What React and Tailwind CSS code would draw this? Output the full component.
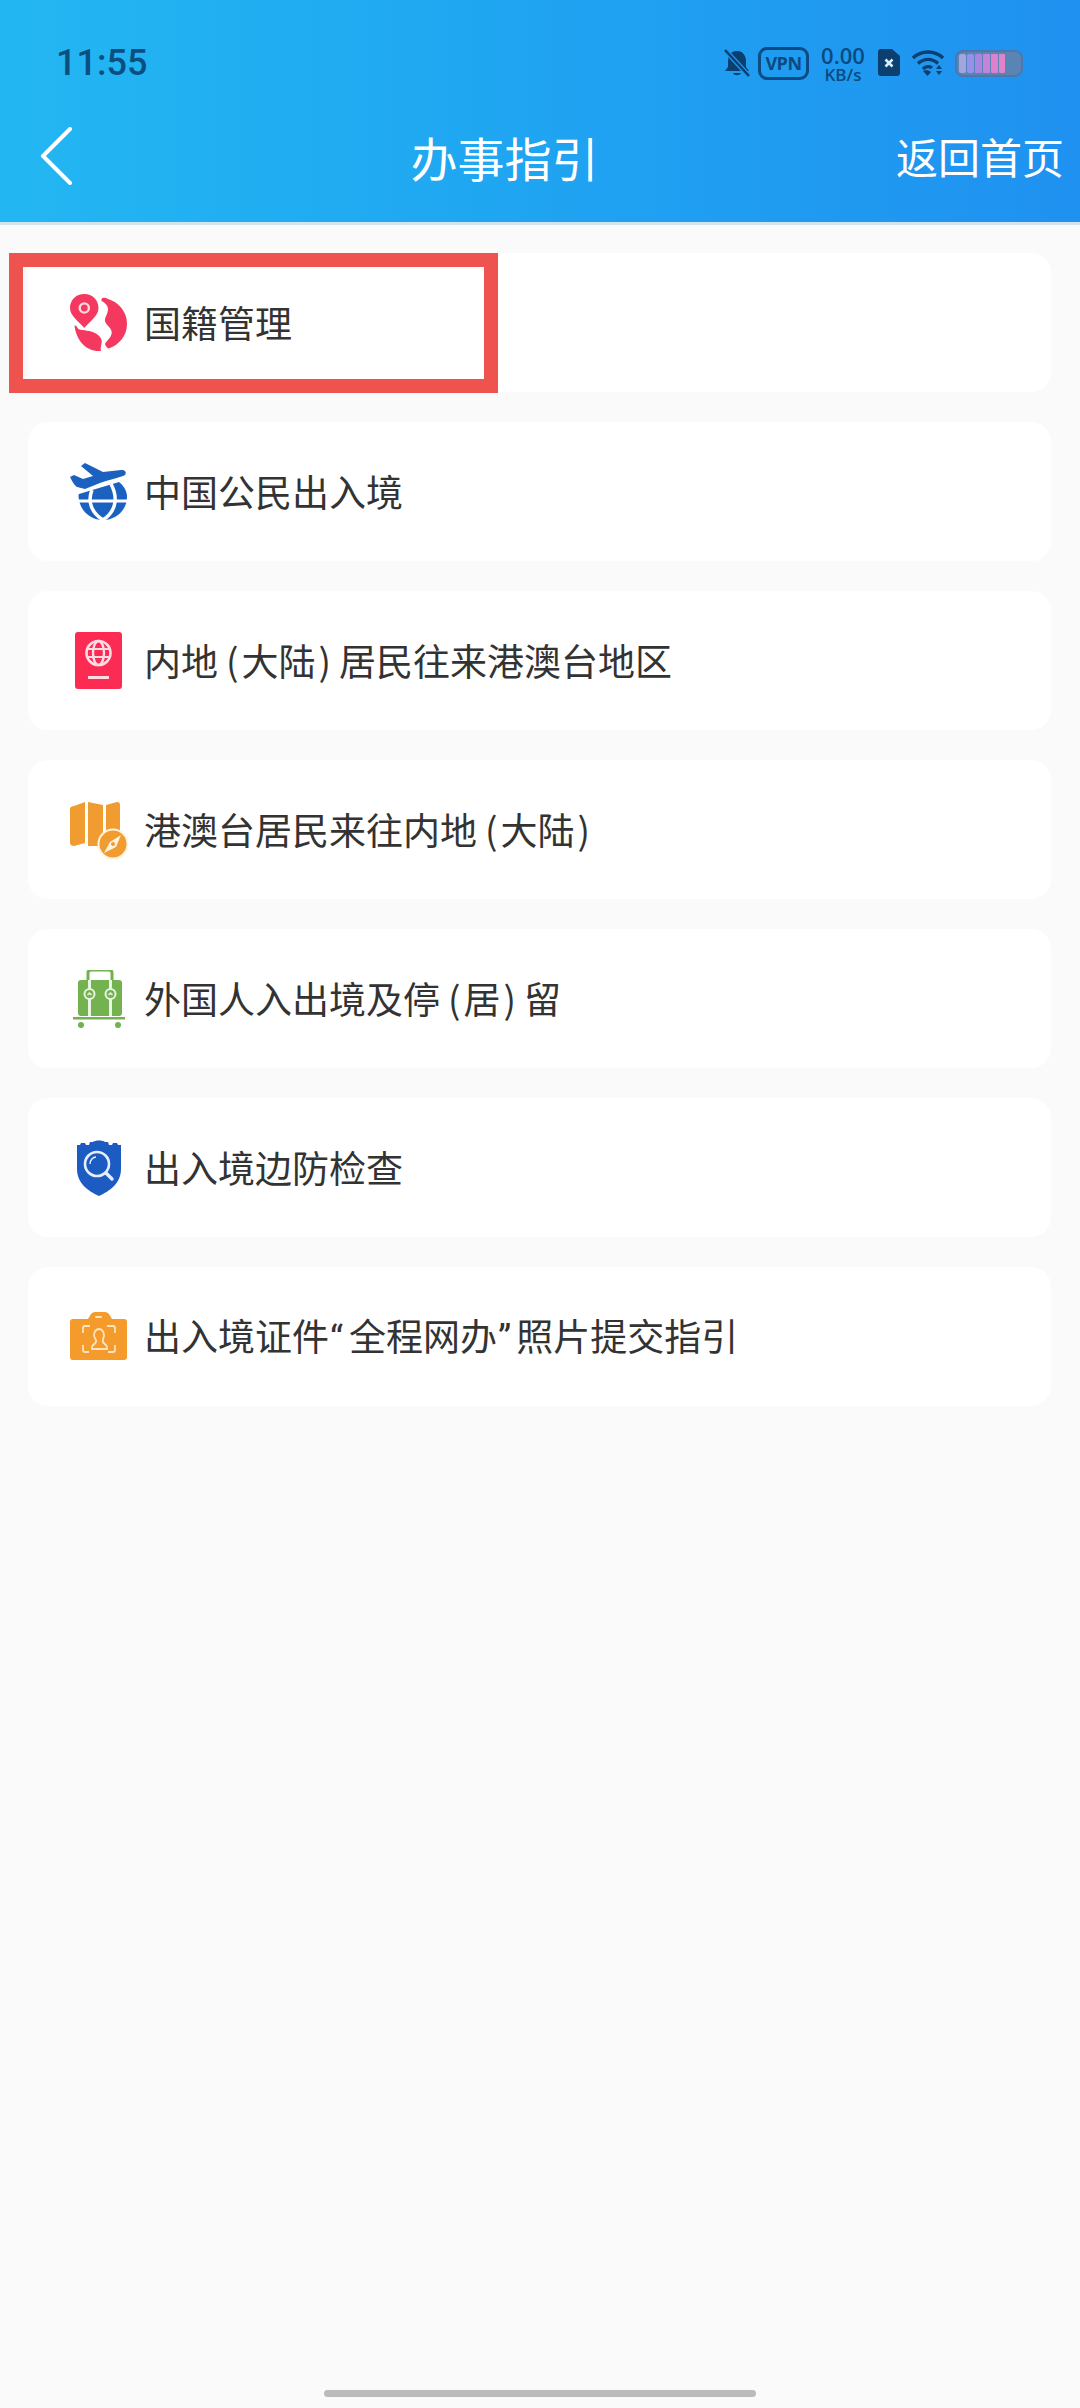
import React from "react";

const Globe = () => (
  <svg width="58" height="58" viewBox="0 0 58 58">
    <path d="M31.5 5 C33 3 36 4 38 5 C48 8 57 17 57 30 C57 42 49 51 38.5 54.5 C37 54 35.5 52 35 50 C37 46 42 43 41.7 38 C41 33 36 31 35 27 C34.5 23 38 20 38 15 C38 11 34 8 31.5 7 Z" fill="#f4385f" />
    <path d="M4.5 31.5 C6 31 7 33 8.3 35 C11 36.5 14 35.5 16.7 36.7 C20 37 24 38 26.7 40 C30 42 32 45 31.7 48 C31.5 51 30 54 31 57 C16 58 6 46 4.5 31.5 Z" fill="#f4385f" />
    <path d="M14.3 0 C22.5 0 28.5 6 28.5 14 C28.5 22 19 28 14.3 34 C9.5 28 0 22 0 14 C0 6 6 0 14.3 0 Z" fill="#f4385f" />
    <circle cx="14.3" cy="14" r="4.6" fill="#f4385f" stroke="#ffd7df" strokeWidth="2.4" />
  </svg>
);

const Plane = () => (
  <svg width="58" height="58" viewBox="0 0 58 58">
    <path d="M7 24 C4 22 2 18 0 14 L4 12 L13 16 L23 13 L11 3 L15 0 L33 9 L51 7 C55 7 57 9 55 12 C52 14 42 16 30 20 L15 26 Z" fill="#1b62c0" />
    <path d="M49 19 C54 23 57 28 57 34 C57 47 46 57 33 57 C20 57 9 47 8.5 33 C8.5 32 8.5 32 9 31 Z" fill="#1b62c0" />
    <path d="M8 38 H58" stroke="#fff" strokeWidth="3" fill="none" />
    <path d="M22 27 C17 39 22 50 33 57 M41 21 C49 36 45 49 33 57" stroke="#fff" strokeWidth="3.5" fill="none" />
  </svg>
);

const Passport = () => (
  <svg width="48" height="58" viewBox="0 0 48 58">
    <rect width="47" height="57" rx="3" fill="#fb2b54" />
    <circle cx="23.5" cy="21" r="12" fill="none" stroke="#ffdbe2" strokeWidth="2.6" />
    <ellipse cx="23.5" cy="21" rx="5.5" ry="12" fill="none" stroke="#ffdbe2" strokeWidth="2.4" />
    <path d="M12 17 H35 M12 25 H35" stroke="#ffdbe2" strokeWidth="2.2" />
    <rect x="13" y="44" width="21" height="3" fill="#ffdbe2" />
  </svg>
);

const MapIcon = () => (
  <svg width="58" height="58" viewBox="0 0 58 58">
    <path d="M0 8 C0 6 2 5 4 5 L15 1 V42 L4 45 C2 45 0 44 0 42 Z" fill="#f09c30" />
    <path d="M18 1 L33 4 V45 L18 45 Z" fill="#f09c30" />
    <path d="M36 4 L47 1 C49 1 50 2 50 4 V30 C44 30 38 34 36 40 Z" fill="#f09c30" />
    <circle cx="43" cy="43" r="14.5" fill="#f09c30" stroke="#fff3df" strokeWidth="2" />
    <path d="M51 34 L46 46 L34 52 L40 41 Z" fill="#fff3df" />
    <circle cx="43" cy="43" r="2" fill="#f09c30" />
  </svg>
);

const Luggage = () => (
  <svg width="52" height="58" viewBox="0 0 52 58">
    <path d="M15 10 V3 C15 1 16 0 18 0 H36 C38 0 39 1 39 3 V10" fill="none" stroke="#73b24f" strokeWidth="3" />
    <rect x="5" y="10" width="44" height="36" rx="3" fill="#73b24f" />
    <rect x="15" y="10" width="3" height="36" fill="#e9f4e2" />
    <rect x="36" y="10" width="3" height="36" fill="#e9f4e2" />
    <circle cx="16.5" cy="24" r="5" fill="#73b24f" stroke="#e9f4e2" strokeWidth="2" />
    <circle cx="37.5" cy="24" r="5" fill="#73b24f" stroke="#e9f4e2" strokeWidth="2" />
    <path d="M14.5 25 L16.5 23 L18.5 25 M35.5 25 L37.5 23 L39.5 25" fill="none" stroke="#e9f4e2" strokeWidth="1.5" />
    <rect x="0" y="47" width="52" height="2.5" fill="#73b24f" />
    <circle cx="8" cy="55" r="3" fill="#73b24f" />
    <circle cx="45" cy="55" r="3" fill="#73b24f" />
  </svg>
);

const Shield = () => (
  <svg width="44" height="58" viewBox="0 0 44 58">
    <path d="M0 6 H3 L4 4 H8 L9 6 H12 L13 3 H16 C18 1 26 1 28 3 H31 L32 6 H35 L36 4 H40 L41 6 H44 V30 C44 44 33 52 22 57 C11 52 0 44 0 30 Z" fill="#1c5cc2" />
    <circle cx="20" cy="25" r="12" fill="none" stroke="#e6eefb" strokeWidth="2.6" />
    <path d="M13 25 C13 21 16 18 19 18" fill="none" stroke="#e6eefb" strokeWidth="1.5" />
    <path d="M29 34 L35 40" stroke="#e6eefb" strokeWidth="3.4" strokeLinecap="round" />
  </svg>
);

const Camera = () => (
  <svg width="58" height="50" viewBox="0 0 58 50">
    <path d="M18 7 L21 2 C22 1 23 0 25 0 H35 C37 0 38 1 39 2 L42 7 H54 C56 7 57 8 57 10 V45 C57 47 56 48 54 48 H3 C1 48 0 47 0 45 V10 C0 8 1 7 3 7 Z" fill="#f49b2c" />
    <rect x="25" y="4" width="7" height="2" rx="1" fill="#fde3c0" />
    <path d="M13 21 V16 C13 15 14 14 15 14 H20 M37 14 H43 C44 14 45 15 45 16 V21 M45 33 V38 C45 39 44 40 43 40 H38 M19 40 H15 C14 40 13 39 13 38 V33" fill="none" stroke="#fde3c0" strokeWidth="1.8" />
    <path d="M29 17 C32 17 34 20 34 23 C34 26 32 28 33 30 C34 32 37 33 37 35 V37 H22 V35 C22 33 25 32 26 30 C27 28 24 26 24 23 C24 20 26 17 29 17 Z" fill="none" stroke="#fde3c0" strokeWidth="1.8" />
  </svg>
);

const Open = () => <span className="mr-[3px] ml-[8px]">(</span>;
const Close = () => <span className="mr-[8px] ml-[3px]">)</span>;

const items = [
  { id: 1, icon: <Globe />, text: "国籍管理" },
  { id: 2, icon: <Plane />, text: "中国公民出入境" },
  { id: 3, icon: <Passport />, text: <>内地<Open />大陆<Close />居民往来港澳台地区</> },
  { id: 4, icon: <MapIcon />, text: <>港澳台居民来往内地<Open />大陆<Close /></> },
  { id: 5, icon: <Luggage />, text: <>外国人入出境及停<Open />居<Close />留</> },
  { id: 6, icon: <Shield />, text: "出入境边防检查" },
  {
    id: 7,
    icon: <Camera />,
    text: (
      <>
        出入境证件<span className="mr-[6px] ml-[1px] font-['Roboto',sans-serif]">“</span>全程网办<span className="mr-[5px] ml-[1px] font-['Roboto',sans-serif]">”</span>照片提交指引
      </>
    ),
  },
];

const StatusIcons = () => (
  <div className="flex items-center text-[#0a4a80]">
    <svg width="26" height="30" viewBox="0 0 26 30" className="mr-[8px]">
      <path d="M13 3 C19 3 22 8 22 13 V19 L25 23 H1 L4 19 V13 C4 8 7 3 13 3 Z M9 25 H17 C16 28 10 28 9 25 Z" fill="#0a3f70" />
      <path d="M1 2 L25 28" stroke="#2096ee" strokeWidth="5" />
      <path d="M1 2 L25 28" stroke="#0a3f70" strokeWidth="2.4" />
    </svg>
    <div className="mr-[11px] flex h-[33px] w-[51px] items-center justify-center rounded-[9px] border-[3px] border-[#0b4c85] font-['Open_Sans',sans-serif] text-[18px] leading-none font-bold tracking-[-0.5px]">
      VPN
    </div>
    <div className="mr-[11px] flex w-[46px] flex-col items-center font-['Open_Sans',sans-serif] font-semibold">
      <span className="text-[22px] leading-[22px]">0.00</span>
      <span className="text-[17px] leading-[17px]">KB/s</span>
    </div>
    <svg width="24" height="28" viewBox="0 0 24 28" className="mr-[10px]">
      <path d="M4 0 H15 L23 7 V24 C23 26 22 27 20 27 H4 C2 27 1 26 1 24 V3 C1 1 2 0 4 0 Z" fill="#0a3f70" />
      <path d="M8.5 10.5 L15.5 17.5 M15.5 10.5 L8.5 17.5" stroke="#d8ecfb" strokeWidth="2.6" />
    </svg>
    <svg width="34" height="27" viewBox="0 0 34 27" className="mr-[10px]">
      <path d="M2 8 C10 0 24 0 32 8 M7 13.5 C13 8 21 8 27 13.5 M12 19 C15 16 19 16 21 18" fill="none" stroke="#0a3f70" strokeWidth="3.4" />
      <path d="M12 21 L16.5 26 L20 22 C18 20 14 20 12 21 Z" fill="#0a3f70" />
      <path d="M28 15 L31 19 H25 Z M25 21 H31 L28 25 Z" fill="#0a3f70" />
    </svg>
    <div className="flex h-[27px] w-[68px] items-center gap-[1px] rounded-[8px] border-[2px] border-[#4c78ad] bg-[#5a83b6] p-[2px]">
      <span className="h-full w-[7px] rounded-[2px] bg-[#a3a6dd]" />
      <span className="h-full w-[7px] rounded-[2px] bg-[#9690ef]" />
      <span className="h-full w-[7px] rounded-[1px] bg-[#a987e0]" />
      <span className="h-full w-[7px] rounded-[1px] bg-[#c485d8]" />
      <span className="h-full w-[7px] rounded-[1px] bg-[#dc80d0]" />
      <span className="h-full w-[6px] rounded-[1px] bg-[#e084c8]" />
    </div>
  </div>
);

export default function App() {
  return (
    <div className="relative flex h-[2408px] w-[1080px] flex-col overflow-hidden bg-[#fafafa] font-['Noto_Sans_CJK_SC',sans-serif]">
      <header className="h-[222px] bg-gradient-to-r from-[#23b7f2] to-[#1f91f0] px-[40px]">
        <div className="flex h-[126px] items-center justify-between">
          <span className="ml-[16px] font-['Roboto',sans-serif] text-[36px] leading-none font-medium text-[#0a4f80]">
            11:55
          </span>
          <div className="mr-[17px]">
            <StatusIcons />
          </div>
        </div>
        <div className="flex h-[60px] items-center justify-between">
          <svg width="32" height="58" viewBox="0 0 32 58" className="text-white">
            <path d="M30 2 L3 29 L30 56" fill="none" stroke="currentColor" strokeWidth="4" strokeLinecap="round" strokeLinejoin="round" />
          </svg>
          <h1 className="ml-[41px] text-[47px] leading-none font-normal text-white">办事指引</h1>
          <span className="mr-[-24px] text-[42px] leading-none text-white">返回首页</span>
        </div>
      </header>
      <div className="h-[3px] bg-[#d4e4ec]" />
      <main className="flex flex-col gap-[30px] pt-[28px] pr-[29px] pl-[28px]">
        {items.map((item) => (
          <div key={item.id} className="flex h-[139px] items-center rounded-[20px] bg-white">
            <div className="flex w-[116px] justify-center pl-[25px]">{item.icon}</div>
            <span className="text-[37px] leading-none text-[#333333]">{item.text}</span>
          </div>
        ))}
      </main>
      <div className="absolute top-[253px] left-[9px] h-[140px] w-[489px] border-[14px] border-[#ef5350]" />
      <div className="absolute bottom-[11px] left-[324px] h-[7px] w-[432px] rounded-full bg-[#bbbbbb]" />
    </div>
  );
}
